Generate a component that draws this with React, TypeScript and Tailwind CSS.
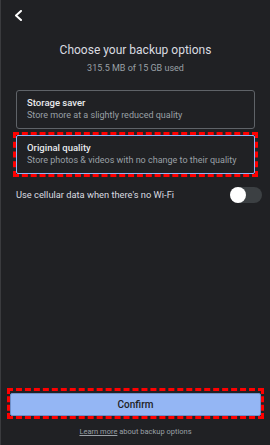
import React, { useState } from "react";

const BackupOptions: React.FC = () => {
  const [cellular, setCellular] = useState(false);

  return (
    <div className="w-[270px] h-[445px] bg-[#202124] border-l border-[#3a3b3e] flex flex-col font-['Roboto',sans-serif] overflow-hidden">
      {/* Header */}
      <div className="pt-[10px] pl-[13px] h-[21px]">
        <svg width="9" height="11" viewBox="0 0 9 11" fill="none">
          <path d="M7 1 L2 5.5 L7 10" stroke="#ffffff" strokeWidth="2" strokeLinecap="round" strokeLinejoin="round" />
        </svg>
      </div>

      <div className="mt-[21px] text-center text-[12px] leading-[16px] text-[#dadce0]">
        Choose your backup options
      </div>
      <div className="mt-[4px] text-center text-[9px] leading-[12px] text-[#9aa0a6]">
        315.5 MB of 15 GB used
      </div>

      {/* Options */}
      <div className="mt-[16px] px-[15px] flex flex-col">
        <div className="h-[39px] border border-[#5f6368] rounded-[3px] px-[10px] pt-[6px]">
          <div className="text-[9.5px] leading-[12px] font-medium text-[#e8eaed]">Storage saver</div>
          <div className="text-[9px] leading-[12px] text-[#9aa0a6]">Store more at a slightly reduced quality</div>
        </div>

        <div className="mt-[3px] mx-[-3px] border-[3px] border-dashed border-[#ff0000]">
          <div className="h-[39px] border border-[#8ab4f8] rounded-[2px] px-[10px] pt-[6px]">
            <div className="text-[9.5px] leading-[12px] font-medium text-[#e8eaed]">Original quality</div>
            <div className="text-[9px] leading-[12px] text-[#9aa0a6]">Store photos &amp; videos with no change to their quality</div>
          </div>
        </div>
      </div>

      {/* Cellular toggle */}
      <div className="mt-[10px] pl-[15px] pr-[8px] flex items-center justify-between h-[16px]">
        <span className="text-[9.3px] text-[#dadce0]">Use cellular data when there's no Wi-Fi</span>
        <button
          onClick={() => setCellular(!cellular)}
          className={`w-[32px] h-[16px] rounded-full flex items-center ${
            cellular ? "bg-[#8ab4f8] justify-end" : "bg-[#3c4043] justify-start"
          }`}
        >
          <span className="w-[16px] h-[16px] rounded-full bg-white block" />
        </button>
      </div>

      {/* Confirm */}
      <div className="mt-auto mx-[6px] border-[3px] border-dashed border-[#ff0000]">
        <button className="w-full h-[23px] bg-[#94b6f4] border border-[#6f8fc9] rounded-[2px] text-[10px] font-medium text-[#202124]">
          Confirm
        </button>
      </div>
      <div className="mt-[8px] mb-[8px] text-center text-[7.5px] leading-[10px] text-[#9aa0a6]">
        <span className="underline">Learn more</span> about backup options
      </div>
    </div>
  );
};

export default function App() {
  return <BackupOptions />;
}
